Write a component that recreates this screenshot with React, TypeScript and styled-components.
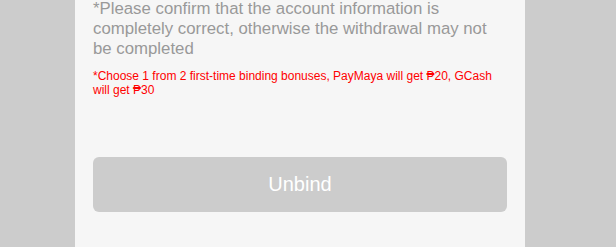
import React from "react";
import styled, { createGlobalStyle } from "styled-components";

const Global = createGlobalStyle`
  html, body { margin: 0; padding: 0; background: #cccccc; }
  body { font-family: "Liberation Sans", Arial, sans-serif; overflow: hidden; }
`;

const Page = styled.div`
  width: 616px;
  height: 247px;
  display: flex;
  justify-content: flex-start;
  background: #cccccc;
`;

const Panel = styled.div`
  margin-left: 75px;
  width: 450px;
  height: 247px;
  background: #f6f6f6;
  padding: 0 18px;
  box-sizing: border-box;
  display: flex;
  flex-direction: column;
`;

const Notice = styled.p`
  margin: -1px 0 0;
  font-size: 16.8px;
  line-height: 20px;
  color: #999999;
`;

const Bonus = styled.p`
  margin: 10px 0 0;
  font-size: 12px;
  line-height: 14px;
  color: #ff0000;
`;

const UnbindButton = styled.button`
  margin-top: 60px;
  width: 414px;
  height: 55px;
  border: none;
  border-radius: 6px;
  background: #cccccc;
  color: #ffffff;
  font-family: "Liberation Sans", Arial, sans-serif;
  font-size: 20px;
  padding: 0;
`;

export default function App() {
  return (
    <>
      <Global />
      <Page>
        <Panel>
          <Notice>
            *Please confirm that the account information is completely correct, otherwise the withdrawal may not be completed
          </Notice>
          <Bonus>
            *Choose 1 from 2 first-time binding bonuses, PayMaya will get ₱20, GCash will get ₱30
          </Bonus>
          <UnbindButton>Unbind</UnbindButton>
        </Panel>
      </Page>
    </>
  );
}
